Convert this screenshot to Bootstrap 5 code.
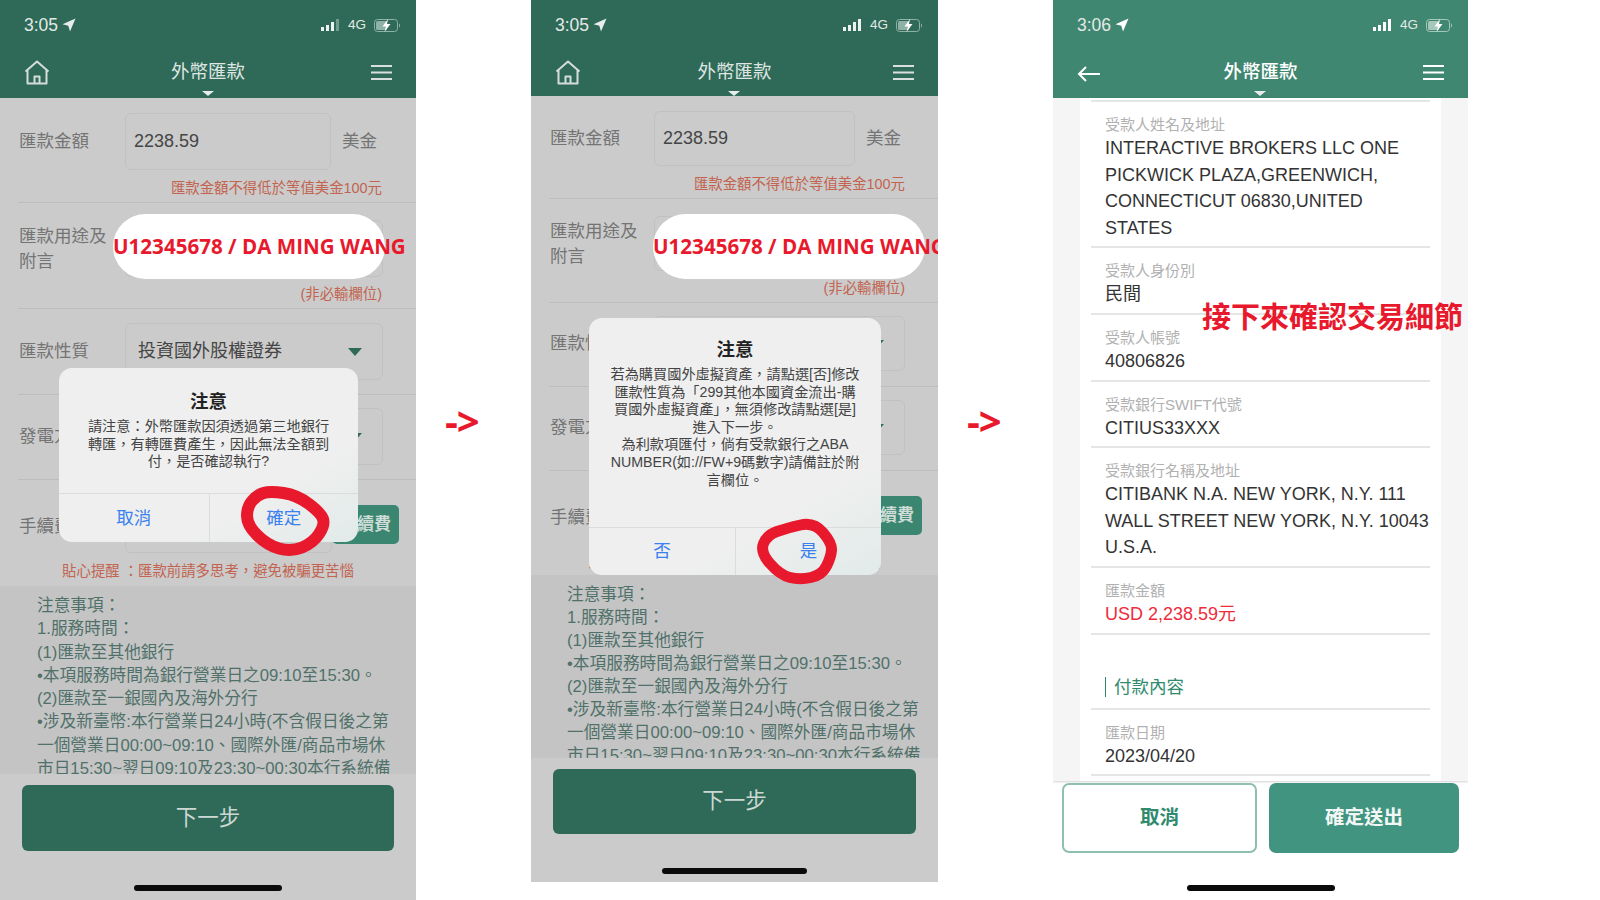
<!DOCTYPE html>
<html lang="zh-Hant">
<head>
<meta charset="utf-8">
<title>外幣匯款</title>
<link href="https://cdn.jsdelivr.net/npm/bootstrap@5.3.0/dist/css/bootstrap.min.css" rel="stylesheet">
<style>
html,body{margin:0;background:#fff;overflow:hidden}
body{font-family:"Liberation Sans","Noto Sans CJK TC",sans-serif;width:1600px;height:900px}
.phone{position:relative;flex:none;overflow:hidden}
.pa{width:416px;height:900px;background:#cbcbcb;--dh:#2e6a57;--lw:107px;--bh:57px;--b1:206px;--bw:258px;--b5:207px;--sl:23.3px}
.pb{width:407px;height:882px;background:#cbcbcb;--dh:#2e6a57;--lw:105px;--bh:55px;--b1:201px;--bw:251px;--b5:201px;--sl:23px}
.pc{width:415px;height:900px;background:#fff;--dh:#3f8770}
.arrowslot{flex:none;width:115px;padding:401px 0 0 29px;font:700 40px/40px "Open Sans",sans-serif;color:#e8192c;letter-spacing:-1px}
.hdr{background:var(--dh);color:#e4e9e6}
.pa .hdr,.pc .hdr{height:98px}.pb .hdr{height:96px}
.stbar{height:50px;padding:0 15px 0 24px;font-size:17.5px}
.stbar .sig{font-size:13.5px}
.navbarx{height:46px;padding:0 24px 0 24px}
.sidebox{width:50px}
.ttl{position:relative;font-size:18.5px;line-height:26px;color:#dfe5e2;margin-top:-2px}
.pc .ttl{color:#fff;font-weight:500}
.ttl::after{content:"";position:absolute;left:50%;bottom:-11px;margin-left:-6px;border:6px solid transparent;border-top:5px solid #e8ecea;border-bottom:0}
.frow{margin-left:18px;border-bottom:1px solid #bdbdbd}
.flabel{width:var(--lw);padding-left:1px;font-size:17.5px;line-height:25px;color:#747474;flex:none;white-space:nowrap}
.fbox{height:var(--bh);border:1px solid #c1c1c1;border-radius:6px;padding:0 8px;color:#454545;font-size:18px}
.b1{width:var(--b1)}.bw{width:var(--bw)}.b5{width:var(--b5)}
.suffix{margin-left:11px;font-size:17.5px;color:#747474}
.fnote{color:#c26450;font-size:14.4px;line-height:20px;white-space:nowrap}
.rednoteA{text-align:right;padding-right:34px}
.pb .rednoteA{padding-right:33px}
.tri{width:0;height:0;border:7px solid transparent;border-top:8px solid #2e6a57;border-bottom:0;margin-right:12px}
.pa .r1{height:105px;padding-top:15px}.pa .r2{height:106px;padding-top:17px}.pa .r3{height:86px;padding-top:14px}.pa .r4{height:85px;padding-top:13px}.pa .r5{height:106px;padding-top:10px;border:0}
.pb .r1{height:103px;padding-top:15px}.pb .r2{height:104px;padding-top:17px}.pb .r3{height:84px;padding-top:13px}.pb .r4{height:84px;padding-top:13px}.pb .r5{height:104px;padding-top:10px;border:0}
.r1 .fnote{margin-top:8px}.r2 .fnote{margin-top:7px}.r5 .fnote{margin-top:8px;text-align:center;padding-right:18px}
.r5 .fbox{height:63px}
.feebtn{height:39px;width:67px;margin-top:15px;padding:0 8px;background:#3b8670;color:#cfdcd7;border:0;border-radius:5px;font-size:17px;font-weight:700;white-space:nowrap;text-align:right}
.pill{position:absolute;background:#fff;border-radius:33px;height:65px;width:272px;top:214px;left:113px;font:700 20.6px/65px "Open Sans",sans-serif;color:#e8192c;white-space:nowrap}
.pb .pill{left:122px}
.notes{background:#c4c4c4;color:#50716a;font-size:16.7px;line-height:var(--sl);padding:8px 0 0 37px;white-space:nowrap;overflow:hidden}
.pa .notes{height:188px}.pb .notes{height:183px;padding-left:36px}
.nextbtn{display:block;margin:11px 22px 0;background:#2e6a57;color:#ccd8d3;border:0;border-radius:6px;font-size:21.5px}
.pa .nextbtn{width:372px;height:66px}.pb .nextbtn{width:363px;height:65px}
.bar{height:6px;background:#0b0b0b;border-radius:3px;margin:34px auto 0;width:148px}
.pb .bar{width:145px}
.dlg{position:absolute;background:#efefef;border-radius:13px;overflow:hidden;text-align:center;color:#444}
.pa .dlg{left:59px;top:368px;width:299px;height:174px;background:linear-gradient(150deg,#efefef 70%,#e1ebe9)}
.pb .dlg{left:58px;top:318px;width:292px;height:257px;background:linear-gradient(150deg,#efefef 72%,#e1ebe9)}
.dlgt{font-size:18.5px;font-weight:700;color:#222;line-height:26px}
.pa .dlgt{margin-top:21px}.pb .dlgt{margin-top:19px}
.dlgm{font-size:14.2px;line-height:17.6px;white-space:nowrap;margin-top:3px;flex:1 1 auto}
.dlgf{border-top:1px solid #dcdcdc}
.pa .dlgf{height:49px}.pb .dlgf{height:48px}
.dlgbtn{flex:1 1 50%;border:0;border-radius:0;background:transparent;color:#3a80ee;font-size:17.5px;padding:0}
.dlgbtn+.dlgbtn{border-left:1px solid #dcdcdc}
.inkbox{position:absolute;inset:0;width:100%;height:100%;pointer-events:none}
.scrollx{height:683px;background:#f5f5f5;overflow:hidden;padding:0 27px;box-shadow:0 1px 2px rgba(0,0,0,.18)}
.cardx{background:#fff;height:100%;padding:2px 11px 0}
.itm{border-bottom:2px solid #e5e5e5;padding:13px 0 5px 14px}
.topline{border-bottom:2px solid #e5e5e5;height:2px}
.itml{font-size:15px;line-height:20px;color:#b1b1b1;white-space:nowrap}
.itmv{font-size:18px;line-height:26.6px;color:#333;white-space:nowrap}
.itmv.redv{color:#ee2b3b}
.sect{height:75px;padding:0 0 11px 14px;border-bottom:2px solid #e5e5e5}
.secth{border-left:1px solid #2f8a6e;padding-left:8px;font-size:17.5px;line-height:20px;color:#2f8a6e}
.btnrow{padding:2px 9px 0;height:72px}
.cbtn{height:70px;border-radius:7px;font-size:19.5px;font-weight:700;padding:0}
.cbtn1{width:195px;background:#fff;color:#2f8a6e;border:2px solid #8fbfae}
.cbtn2{width:190px;background:#419580;color:#f2f7f5;border:0;margin-left:12px}
.pc .bar{margin-top:32px}
.remark{position:absolute;left:149px;top:294px;font:700 29px/42px "Noto Sans CJK TC",sans-serif;color:#e8192c;white-space:nowrap}
</style>
</head>
<body>
<div class="d-flex">

<!-- Phone 1 -->
<div class="phone pa">
  <div class="hdr">
    <div class="stbar d-flex justify-content-between align-items-center">
      <div class="d-flex align-items-center gap-1">3:05
        <svg width="14" height="14" viewBox="0 0 14 14"><path d="M13.5.5 0.5 6.2l5.8 1.6 1.7 5.7z" fill="#e8ecea"/></svg>
      </div>
      <div class="sig d-flex align-items-center gap-2">
        <svg width="19" height="12" viewBox="0 0 19 12"><path d="M0 8h3v4H0zM5 6h3v6H5zM10 3h3v9h-3z" fill="#eef1ef"/><path d="M15 0h3v12h-3z" fill="#6e9c8d"/></svg>
        <span>4G</span>
        <svg width="27" height="13" viewBox="0 0 27 13"><rect x=".5" y=".5" width="23" height="12" rx="3" fill="none" stroke="#8fb2a6"/><rect x="2" y="2" width="11" height="9" rx="1.5" fill="#8fb2a6"/><path d="M25 4.5c1.3.4 1.3 3.6 0 4z" fill="#8fb2a6"/><path d="M14 0 8.5 7.5H12L10.5 13l6-8H13z" fill="#fff"/></svg>
      </div>
    </div>
    <div class="navbarx d-flex justify-content-between align-items-center">
      <div class="sidebox">
        <svg width="26" height="26" viewBox="0 0 26 26" fill="none" stroke="#d5dcd9" stroke-width="2" stroke-linejoin="round"><path d="M1.5 11.5 13 1.5l11.5 10M3.5 10v13.500h19V10M10.500 23.500V16.500h5v7"/></svg>
      </div>
      <div class="ttl">外幣匯款</div>
      <div class="sidebox d-flex justify-content-end">
        <svg width="21" height="16" viewBox="0 0 21 16" fill="#d9dfdc"><rect width="21" height="2"/><rect y="6.500" width="21" height="2"/><rect y="13" width="21" height="2"/></svg>
      </div>
    </div>
  </div>
  <div class="frow r1">
    <div class="d-flex align-items-center"><div class="flabel">匯款金額</div><div class="fbox b1 d-flex align-items-center">2238.59</div><div class="suffix">美金</div></div>
    <div class="fnote rednoteA">匯款金額不得低於等值美金100元</div>
  </div>
  <div class="frow r2">
    <div class="d-flex align-items-center"><div class="flabel">匯款用途及<br>附言</div><div class="fbox bw"></div></div>
    <div class="fnote rednoteA">(非必輸欄位)</div>
  </div>
  <div class="frow r3">
    <div class="d-flex align-items-center"><div class="flabel">匯款性質</div><div class="fbox bw d-flex align-items-center justify-content-between ps-2"><span class="ms-1">投資國外股權證券</span><span class="tri"></span></div></div>
  </div>
  <div class="frow r4">
    <div class="d-flex align-items-center"><div class="flabel">發電方式</div><div class="fbox bw d-flex align-items-center justify-content-end"><span class="tri"></span></div></div>
  </div>
  <div class="frow r5">
    <div class="d-flex align-items-start"><div class="flabel mt-4">手續費</div><div class="fbox b5"></div><button class="btn feebtn" type="button">手續費</button></div>
    <div class="fnote">貼心提醒 ：匯款前請多思考，避免被騙更苦惱</div>
  </div>
  <div class="notes">注意事項：<br>1.服務時間：<br>(1)匯款至其他銀行<br>•本項服務時間為銀行營業日之09:10至15:30。<br>(2)匯款至一銀國內及海外分行<br>•涉及新臺幣:本行營業日24小時(不含假日後之第<br>一個營業日00:00~09:10、國際外匯/商品市場休<br>市日15:30~翌日09:10及23:30~00:30本行系統備</div>
  <button class="btn nextbtn" type="button">下一步</button>
  <div class="bar"></div>
  <div class="pill">U12345678 / DA MING WANG</div>
  <div class="dlg d-flex flex-column">
    <div class="dlgt">注意</div>
    <div class="dlgm">請注意：外幣匯款因須透過第三地銀行<br>轉匯，有轉匯費產生，因此無法全額到<br>付，是否確認執行?</div>
    <div class="dlgf d-flex"><button class="btn dlgbtn" type="button">取消</button><button class="btn dlgbtn" type="button">確定</button></div>
  </div>
  <svg class="inkbox" viewBox="0 0 416 900"><path d="M283.500 493Q297 495 309 504Q321 513 323 519Q325 525 319 534Q313 543 302 547.500Q291 552 279 548.500Q267 545 257 535Q247 525 247 516Q247 507 252 501Q257 495 263.500 493Q270 491 283.500 493Z" fill="none" stroke="#e8192c" stroke-width="12"/></svg>
</div>

<div class="arrowslot">-&gt;</div>

<!-- Phone 2 -->
<div class="phone pb">
  <div class="hdr">
    <div class="stbar d-flex justify-content-between align-items-center">
      <div class="d-flex align-items-center gap-1">3:05
        <svg width="14" height="14" viewBox="0 0 14 14"><path d="M13.5.5 0.5 6.2l5.8 1.6 1.7 5.7z" fill="#e8ecea"/></svg>
      </div>
      <div class="sig d-flex align-items-center gap-2">
        <svg width="19" height="12" viewBox="0 0 19 12" fill="#eef1ef"><path d="M0 8h3v4H0zM5 6h3v6H5zM10 3h3v9h-3zM15 0h3v12h-3z"/></svg>
        <span>4G</span>
        <svg width="27" height="13" viewBox="0 0 27 13"><rect x=".5" y=".5" width="23" height="12" rx="3" fill="none" stroke="#8fb2a6"/><rect x="2" y="2" width="11" height="9" rx="1.5" fill="#8fb2a6"/><path d="M25 4.5c1.3.4 1.3 3.6 0 4z" fill="#8fb2a6"/><path d="M14 0 8.5 7.5H12L10.5 13l6-8H13z" fill="#fff"/></svg>
      </div>
    </div>
    <div class="navbarx d-flex justify-content-between align-items-center">
      <div class="sidebox">
        <svg width="26" height="26" viewBox="0 0 26 26" fill="none" stroke="#d5dcd9" stroke-width="2" stroke-linejoin="round"><path d="M1.5 11.5 13 1.5l11.5 10M3.5 10v13.500h19V10M10.500 23.500V16.500h5v7"/></svg>
      </div>
      <div class="ttl">外幣匯款</div>
      <div class="sidebox d-flex justify-content-end">
        <svg width="21" height="16" viewBox="0 0 21 16" fill="#d9dfdc"><rect width="21" height="2"/><rect y="6.500" width="21" height="2"/><rect y="13" width="21" height="2"/></svg>
      </div>
    </div>
  </div>
  <div class="frow r1">
    <div class="d-flex align-items-center"><div class="flabel">匯款金額</div><div class="fbox b1 d-flex align-items-center">2238.59</div><div class="suffix">美金</div></div>
    <div class="fnote rednoteA">匯款金額不得低於等值美金100元</div>
  </div>
  <div class="frow r2">
    <div class="d-flex align-items-center"><div class="flabel">匯款用途及<br>附言</div><div class="fbox bw"></div></div>
    <div class="fnote rednoteA">(非必輸欄位)</div>
  </div>
  <div class="frow r3">
    <div class="d-flex align-items-center"><div class="flabel">匯款性質</div><div class="fbox bw d-flex align-items-center justify-content-end"><span class="tri"></span></div></div>
  </div>
  <div class="frow r4">
    <div class="d-flex align-items-center"><div class="flabel">發電方式</div><div class="fbox bw d-flex align-items-center justify-content-end"><span class="tri"></span></div></div>
  </div>
  <div class="frow r5">
    <div class="d-flex align-items-start"><div class="flabel mt-4">手續費</div><div class="fbox b5"></div><button class="btn feebtn" type="button">手續費</button></div>
    <div class="fnote">貼心提醒 ：匯款前請多思考，避免被騙更苦惱</div>
  </div>
  <div class="notes">注意事項：<br>1.服務時間：<br>(1)匯款至其他銀行<br>•本項服務時間為銀行營業日之09:10至15:30。<br>(2)匯款至一銀國內及海外分行<br>•涉及新臺幣:本行營業日24小時(不含假日後之第<br>一個營業日00:00~09:10、國際外匯/商品市場休<br>市日15:30~翌日09:10及23:30~00:30本行系統備</div>
  <button class="btn nextbtn" type="button">下一步</button>
  <div class="bar"></div>
  <div class="pill">U12345678 / DA MING WANG</div>
  <div class="dlg d-flex flex-column">
    <div class="dlgt">注意</div>
    <div class="dlgm">若為購買國外虛擬資產，請點選[否]修改<br>匯款性質為「299其他本國資金流出-購<br>買國外虛擬資產」，無須修改請點選[是]<br>進入下一步。<br>為利款項匯付，倘有受款銀行之ABA<br>NUMBER(如://FW+9碼數字)請備註於附<br>言欄位。</div>
    <div class="dlgf d-flex"><button class="btn dlgbtn" type="button">否</button><button class="btn dlgbtn" type="button">是</button></div>
  </div>
  <svg class="inkbox" viewBox="0 0 407 882"><path d="M292 532.500Q301 543 300.500 550Q300 557 295.500 566Q291 575 280 577.500Q269 580 259 577.500Q249 575 239 563.500Q229 552 232.500 543.500Q236 535 246 531.500Q256 528 269.500 525Q283 522 292 532.500Z" fill="none" stroke="#e8192c" stroke-width="11"/></svg>
</div>

<div class="arrowslot">-&gt;</div>

<!-- Phone 3 -->
<div class="phone pc">
  <div class="hdr">
    <div class="stbar d-flex justify-content-between align-items-center">
      <div class="d-flex align-items-center gap-1">3:06
        <svg width="14" height="14" viewBox="0 0 14 14"><path d="M13.5.5 0.5 6.2l5.8 1.6 1.7 5.7z" fill="#fff"/></svg>
      </div>
      <div class="sig d-flex align-items-center gap-2">
        <svg width="19" height="12" viewBox="0 0 19 12" fill="#fff"><path d="M0 8h3v4H0zM5 6h3v6H5zM10 3h3v9h-3zM15 0h3v12h-3z"/></svg>
        <span>4G</span>
        <svg width="27" height="13" viewBox="0 0 27 13"><rect x=".5" y=".5" width="23" height="12" rx="3" fill="none" stroke="#a5c8bb"/><rect x="2" y="2" width="11" height="9" rx="1.5" fill="#a5c8bb"/><path d="M25 4.5c1.3.4 1.3 3.6 0 4z" fill="#a5c8bb"/><path d="M14 0 8.5 7.5H12L10.5 13l6-8H13z" fill="#fff"/></svg>
      </div>
    </div>
    <div class="navbarx d-flex justify-content-between align-items-center">
      <div class="sidebox">
        <svg width="24" height="18" viewBox="0 0 24 18" fill="none" stroke="#fff" stroke-width="2"><path d="M23 9H2M9 2 2 9l7 7"/></svg>
      </div>
      <div class="ttl">外幣匯款</div>
      <div class="sidebox d-flex justify-content-end">
        <svg width="21" height="16" viewBox="0 0 21 16" fill="#fff"><rect width="21" height="2"/><rect y="6.500" width="21" height="2"/><rect y="13" width="21" height="2"/></svg>
      </div>
    </div>
  </div>
  <div class="scrollx">
    <div class="cardx">
      <div class="topline"></div>
      <div class="itm"><div class="itml">受款人姓名及地址</div><div class="itmv">INTERACTIVE BROKERS LLC ONE<br>PICKWICK PLAZA,GREENWICH,<br>CONNECTICUT 06830,UNITED<br>STATES</div></div>
      <div class="itm"><div class="itml">受款人身份別</div><div class="itmv">民間</div></div>
      <div class="itm"><div class="itml">受款人帳號</div><div class="itmv">40806826</div></div>
      <div class="itm"><div class="itml">受款銀行SWIFT代號</div><div class="itmv">CITIUS33XXX</div></div>
      <div class="itm"><div class="itml">受款銀行名稱及地址</div><div class="itmv">CITIBANK N.A. NEW YORK, N.Y. 111<br>WALL STREET NEW YORK, N.Y. 10043<br>U.S.A.</div></div>
      <div class="itm"><div class="itml">匯款金額</div><div class="itmv redv">USD 2,238.59元</div></div>
      <div class="sect d-flex align-items-end"><div class="secth">付款內容</div></div>
      <div class="itm"><div class="itml">匯款日期</div><div class="itmv">2023/04/20</div></div>
    </div>
  </div>
  <div class="btnrow d-flex"><button class="btn cbtn cbtn1" type="button">取消</button><button class="btn cbtn cbtn2" type="button">確定送出</button></div>
  <div class="bar"></div>
  <div class="remark">接下來確認交易細節</div>
</div>

</div>
<script src="https://cdn.jsdelivr.net/npm/bootstrap@5.3.0/dist/js/bootstrap.bundle.min.js"></script>
</body>
</html>
